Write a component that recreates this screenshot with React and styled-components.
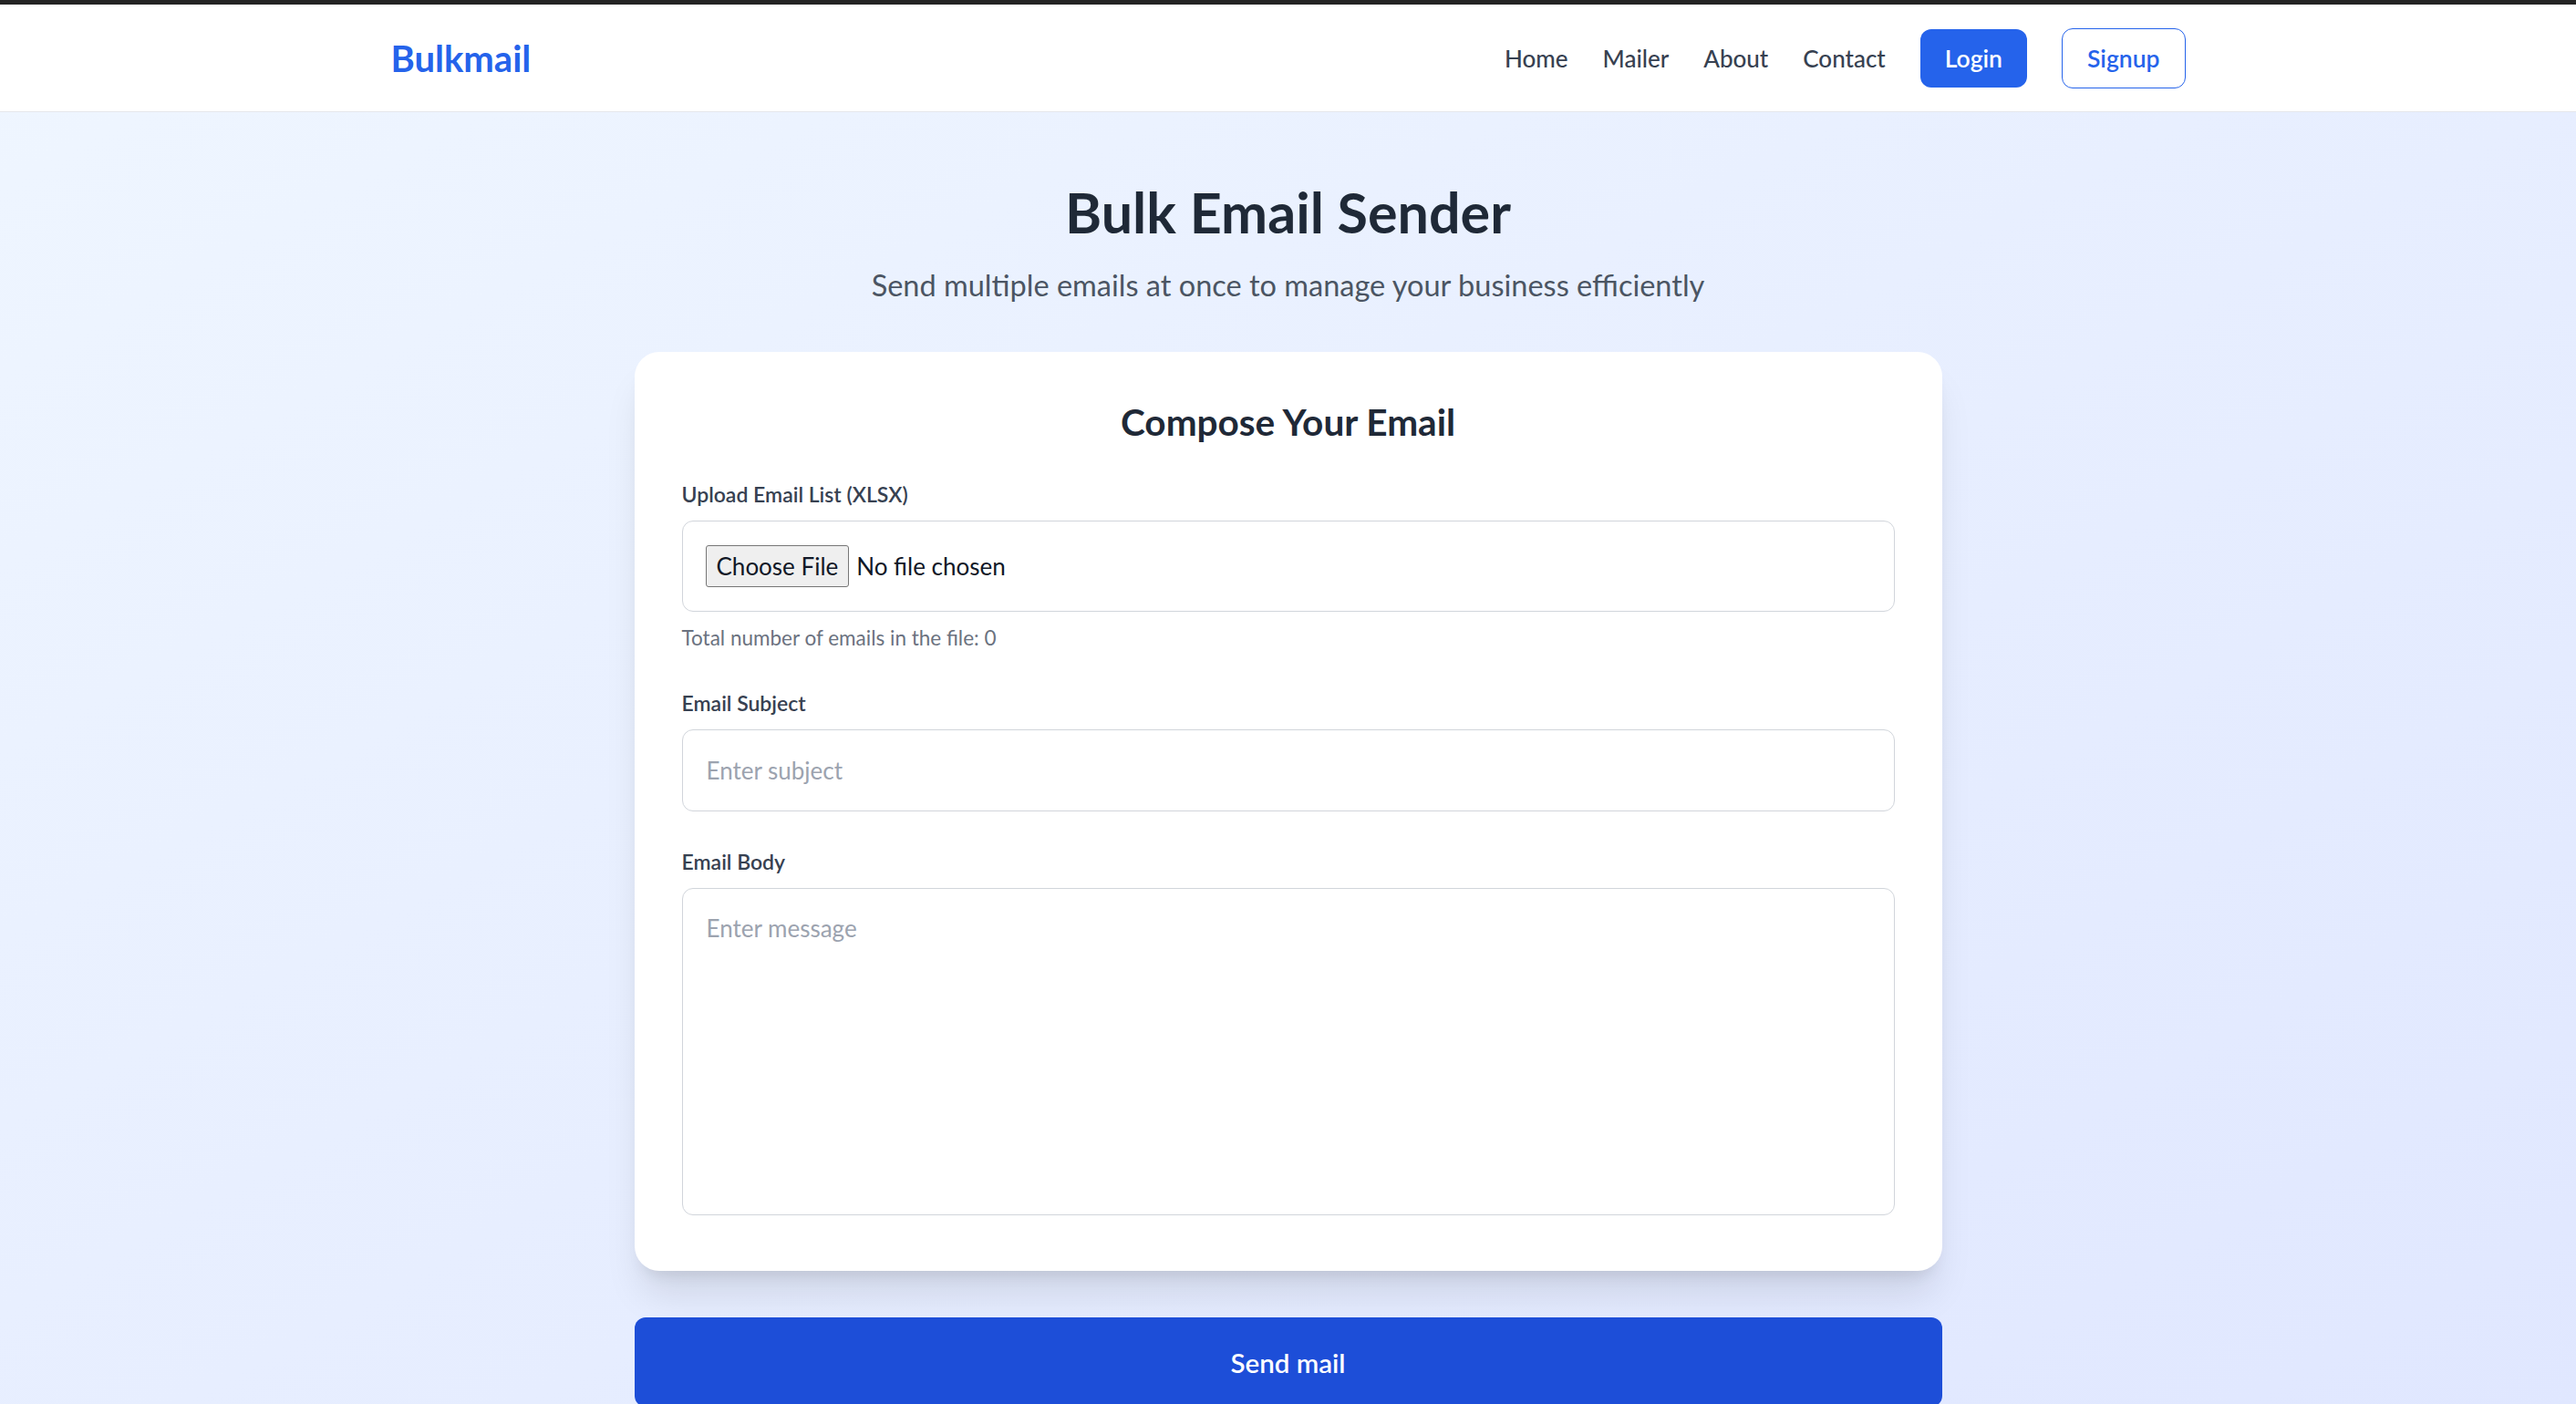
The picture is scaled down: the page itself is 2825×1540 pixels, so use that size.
import styled, { createGlobalStyle } from "styled-components";

const GlobalStyle = createGlobalStyle`
  * {
    box-sizing: border-box;
  }
  body {
    margin: 0;
    font-family: Lato, "Open Sans", sans-serif;
    color: #1f2937;
  }
`;

const Page = styled.div`
  min-height: 100vh;
  background: linear-gradient(to bottom right, #eff6ff, #e0e7ff);
`;

const Navbar = styled.nav`
  background: #ffffff;
  border-top: 5px solid #242424;
  border-bottom: 1px solid #e5e7eb;
`;

const NavInner = styled.div`
  width: 1968px;
  height: 117px;
  margin: 0 auto;
  display: flex;
  align-items: center;
  justify-content: space-between;
`;

const Logo = styled.a`
  font-size: 40px;
  font-weight: 700;
  color: #2563eb;
  text-decoration: none;
`;

const NavLinks = styled.div`
  display: flex;
  align-items: center;
  gap: 38px;
`;

const NavLink = styled.a`
  font-size: 26px;
  font-weight: 500;
  color: #374151;
  text-decoration: none;
`;

const NavButton = styled.button`
  height: ${(p) => (p.$outline ? "66px" : "64px")};
  padding: 0 27px;
  border-radius: 12px;
  font-family: inherit;
  font-size: 26.5px;
  font-weight: 600;
  cursor: pointer;
  background: ${(p) => (p.$outline ? "#ffffff" : "#2563eb")};
  color: ${(p) => (p.$outline ? "#2563eb" : "#ffffff")};
  border: ${(p) => (p.$outline ? "1.5px solid #2563eb" : "none")};
`;

const Main = styled.main`
  padding-top: 73px;
  display: flex;
  flex-direction: column;
  align-items: center;
`;

const Title = styled.h1`
  margin: 0;
  font-size: 61px;
  line-height: 73px;
  font-weight: 700;
  color: #1f2937;
`;

const Subtitle = styled.p`
  margin: 22px 0 0;
  font-size: 32.5px;
  line-height: 43px;
  color: #4b5563;
`;

const Card = styled.section`
  width: 1434px;
  margin-top: 52px;
  padding: 52px 52px 61px;
  background: #ffffff;
  border-radius: 27px;
  box-shadow: 0 33px 42px -8px rgba(0, 0, 0, 0.1),
    0 13px 17px -10px rgba(0, 0, 0, 0.1);
`;

const CardTitle = styled.h2`
  margin: 0;
  text-align: center;
  font-size: 40.5px;
  line-height: 49px;
  font-weight: 700;
  color: #1f2937;
`;

const Field = styled.div`
  margin-top: ${(p) => p.$gap || "39px"};
  display: flex;
  flex-direction: column;
`;

const Label = styled.label`
  font-size: 23px;
  line-height: 32px;
  font-weight: 600;
  color: #374151;
  margin-bottom: 13px;
`;

const FileInput = styled.input`
  width: 100%;
  padding: 26px 25px;
  border: 1px solid #d1d5db;
  border-radius: 12px;
  background: #ffffff;
  font-family: inherit;
  font-size: 26px;
  color: #111827;

  &::file-selector-button {
    height: 46px;
    margin-right: 8px;
    padding: 0 11px;
    border: 1px solid #767676;
    border-radius: 3px;
    background: #efefef;
    font-family: inherit;
    font-size: 26px;
    color: #111827;
  }
`;

const Hint = styled.p`
  margin: 14px 0 0;
  font-size: 22.5px;
  line-height: 30px;
  color: #6b7280;
`;

const TextInput = styled.input`
  width: 100%;
  height: 90px;
  padding: 0 26px;
  border: 1px solid #d1d5db;
  border-radius: 12px;
  font-family: inherit;
  font-size: 26px;
  color: #111827;
  outline: none;

  &::placeholder {
    color: #9ca3af;
  }
`;

const TextArea = styled.textarea`
  width: 100%;
  height: 359px;
  padding: 24px 26px;
  border: 1px solid #d1d5db;
  border-radius: 12px;
  font-family: inherit;
  font-size: 26px;
  line-height: 1.5;
  color: #111827;
  resize: none;
  outline: none;

  &::placeholder {
    color: #9ca3af;
  }
`;

const SendButton = styled.button`
  width: 1434px;
  height: 98px;
  margin-top: 51px;
  border: none;
  border-radius: 12px;
  background: #1d4ed8;
  color: #ffffff;
  font-family: inherit;
  font-size: 29.5px;
  font-weight: 600;
  cursor: pointer;
`;

export default function App() {
  return (
    <Page>
      <GlobalStyle />
      <Navbar>
        <NavInner>
          <Logo href="#">Bulkmail</Logo>
          <NavLinks>
            <NavLink href="#">Home</NavLink>
            <NavLink href="#">Mailer</NavLink>
            <NavLink href="#">About</NavLink>
            <NavLink href="#">Contact</NavLink>
            <NavButton>Login</NavButton>
            <NavButton $outline>Signup</NavButton>
          </NavLinks>
        </NavInner>
      </Navbar>
      <Main>
        <Title>Bulk Email Sender</Title>
        <Subtitle>
          Send multiple emails at once to manage your business efficiently
        </Subtitle>
        <Card>
          <CardTitle>Compose Your Email</CardTitle>
          <Field>
            <Label>Upload Email List (XLSX)</Label>
            <FileInput type="file" accept=".xlsx" />
            <Hint>Total number of emails in the file: 0</Hint>
          </Field>
          <Field $gap="40px">
            <Label>Email Subject</Label>
            <TextInput type="text" placeholder="Enter subject" />
          </Field>
          <Field>
            <Label>Email Body</Label>
            <TextArea placeholder="Enter message" />
          </Field>
        </Card>
        <SendButton>Send mail</SendButton>
      </Main>
    </Page>
  );
}
